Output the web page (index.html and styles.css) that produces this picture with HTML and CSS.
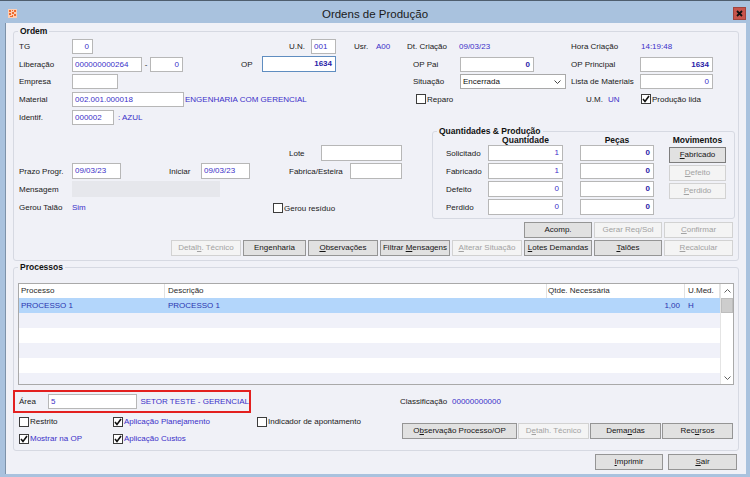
FILE: index.html
```html
<!DOCTYPE html>
<html lang="pt">
<head>
<meta charset="utf-8">
<title>Ordens de Produção</title>
<link rel="stylesheet" href="styles.css">
</head>
<body>
<div class="window">
  <div class="titlebar">
    <svg class="appicon" width="9" height="9" viewBox="0 0 9 9"><rect width="9" height="9" fill="#fbcfb6"/><path d="M1 1h2v2H1zM4 1h1v1H4zM4 3h2v2H4zM6 1h2v2H6zM1 4h2v2H1zM6 5h2v2H6zM2 7h2v1H2zM4 6h1v2H4z" fill="#ef6b2e"/></svg>
    <div class="title">Ordens de Produção</div>
    <div class="close"><svg width="7" height="7" viewBox="0 0 7 7"><path d="M1 1L6 6M6 1L1 6" stroke="#111" stroke-width="1.8"/></svg></div>
  </div>
  <div class="client">
    <section class="group ordem">
      <span class="legend">Ordem</span>
      <div class="row h18">
        <span class="lbl w53">TG</span>
        <span class="tb w21 r">0</span>
        <span class="lbl w218 ar">U.N.</span>
        <span class="tb w25">001</span>
        <span class="lbl w40 pl18">Usr.</span>
        <span class="val w31">A00</span>
        <span class="lbl w52">Dt. Criação</span>
        <span class="val w112">09/03/23</span>
        <span class="lbl w70">Hora Criação</span>
        <span class="val">14:19:48</span>
      </div>
      <div class="row h18">
        <span class="lbl w53">Liberação</span>
        <span class="tb w70">000000000264</span>
        <span class="lbl w8 ac">-</span>
        <span class="tb w33 r">0</span>
        <span class="lbl w79 pl58">OP</span>
        <span class="tb w74 r b focus">1634</span>
        <span class="sp w77"></span>
        <span class="lbl w47">OP Pai</span>
        <span class="tb w74 r b">0</span>
        <span class="sp w37"></span>
        <span class="lbl w69">OP Principal</span>
        <span class="tb w73 r b">1634</span>
      </div>
      <div class="row h17">
        <span class="lbl w53">Empresa</span>
        <span class="tb w46"></span>
        <span class="sp w295"></span>
        <span class="lbl w47">Situação</span>
        <span class="select w106"><span>Encerrada</span><svg width="7" height="4" viewBox="0 0 7 4"><path d="M0.5 0.5L3.5 3.5L6.5 0.5" stroke="#444" fill="none"/></svg></span>
        <span class="sp w5"></span>
        <span class="lbl w69">Lista de Materiais</span>
        <span class="tb w73 r">0</span>
      </div>
      <div class="row h18">
        <span class="lbl w53">Material</span>
        <span class="tb w112">002.001.000018</span>
        <span class="val w232 pl1">ENGENHARIA COM GERENCIAL</span>
        <span class="cb w170"><span class="box"></span>Reparo</span>
        <span class="lbl w22">U.M.</span>
        <span class="val w33">UN</span>
        <span class="cb"><span class="box"><svg width="8" height="8" viewBox="0 0 8 8"><path d="M1 4L3 6.5L7 1" stroke="#111" stroke-width="1.6" fill="none"/></svg></span>Produção lida</span>
      </div>
      <div class="row h18">
        <span class="lbl w53">Identif.</span>
        <span class="tb w42">000002</span>
        <span class="val pl4">: AZUL</span>
      </div>

      <div class="lower">
        <div class="lcol">
          <div class="row h18">
            <span class="sp w270"></span>
            <span class="lbl w32">Lote</span>
            <span class="tb h16 w81"></span>
          </div>
          <div class="row h18">
            <span class="lbl w53">Prazo Progr.</span>
            <span class="tb h16 w49">09/03/23</span>
            <span class="sp w48"></span>
            <span class="lbl w32">Iniciar</span>
            <span class="tb h16 w49">09/03/23</span>
            <span class="sp w39"></span>
            <span class="lbl w61">Fabrica/Esteira</span>
            <span class="tb h16 w52"></span>
          </div>
          <div class="row h18">
            <span class="lbl w53">Mensagem</span>
            <span class="msg w148"></span>
          </div>
          <div class="row h18">
            <span class="lbl w53">Gerou Talão</span>
            <span class="val w201">Sim</span>
            <span class="cb down1"><span class="box"></span>Gerou resíduo</span>
          </div>
        </div>
        <section class="group qtd">
          <span class="legend">Quantidades &amp; Produção</span>
          <div class="qhead">
            <span class="w42"></span>
            <span class="w75 ac">Quantidade</span>
            <span class="w17"></span>
            <span class="w74 ac">Peças</span>
            <span class="w15"></span>
            <span class="w57 ac">Movimentos</span>
          </div>
          <div class="qrow">
            <span class="lbl w42">Solicitado</span>
            <span class="tb h16 w75 r">1</span>
            <span class="sp w17"></span>
            <span class="tb h16 w74 r b">0</span>
            <span class="sp w15"></span>
            <span class="btn qb w57"><u>F</u>abricado</span>
          </div>
          <div class="qrow">
            <span class="lbl w42">Fabricado</span>
            <span class="tb h16 w75 r">1</span>
            <span class="sp w17"></span>
            <span class="tb h16 w74 r b">0</span>
            <span class="sp w15"></span>
            <span class="btn qb dis w57"><u>D</u>efeito</span>
          </div>
          <div class="qrow">
            <span class="lbl w42">Defeito</span>
            <span class="tb h16 w75 r">0</span>
            <span class="sp w17"></span>
            <span class="tb h16 w74 r b">0</span>
            <span class="sp w15"></span>
            <span class="btn qb dis w57"><u>P</u>erdido</span>
          </div>
          <div class="qrow">
            <span class="lbl w42">Perdido</span>
            <span class="tb h16 w75 r">0</span>
            <span class="sp w17"></span>
            <span class="tb h16 w74 r b">0</span>
          </div>
        </section>
      </div>

      <div class="btnrow first">
        <span class="btn w68">Acomp.</span>
        <span class="btn dis w68">Gerar Req/Sol</span>
        <span class="btn dis w69"><u>C</u>onfirmar</span>
      </div>
      <div class="btnrow">
        <span class="btn dis w70">Detal<u>h</u>. Técnico</span>
        <span class="btn w63">Engenharia</span>
        <span class="btn w70"><u>O</u>bservações</span>
        <span class="btn w70">Filtrar <u>M</u>ensagens</span>
        <span class="btn dis w70"><u>A</u>lterar Situação</span>
        <span class="btn w68"><u>L</u>otes Demandas</span>
        <span class="btn w68"><u>T</u>alões</span>
        <span class="btn dis w69"><u>R</u>ecalcular</span>
      </div>
    </section>

    <section class="group proc">
      <span class="legend">Processos</span>
      <div class="grid">
        <div class="gmain">
          <div class="ghead">
            <span class="c1">Processo</span><span class="c2">Descrição</span><span class="c3">Qtde. Necessária</span><span class="c4">U.Med.</span>
          </div>
          <div class="grow sel">
            <span class="c1">PROCESSO 1</span><span class="c2">PROCESSO 1</span><span class="c3 r">1,00</span><span class="c4">H</span>
          </div>
          <div class="grow alt"></div>
          <div class="grow"></div>
          <div class="grow alt"></div>
          <div class="grow"></div>
          <div class="grow alt"></div>
        </div>
        <div class="vscroll">
          <div class="sbtn"><svg width="7" height="4" viewBox="0 0 7 4"><path d="M0.5 3.5L3.5 0.5L6.5 3.5" stroke="#606060" fill="none"/></svg></div>
          <div class="thumb"></div>
          <div class="track"></div>
          <div class="sbtn dn"><svg width="7" height="4" viewBox="0 0 7 4"><path d="M0.5 0.5L3.5 3.5L6.5 0.5" stroke="#606060" fill="none"/></svg></div>
        </div>
      </div>

      <div class="arearow">
        <div class="area">
          <span class="lbl w30">Área</span>
          <span class="tb w92">5</span>
          <span class="val pl3">SETOR TESTE - GERENCIAL</span>
        </div>
        <span class="lbl w52 classif">Classificação</span>
        <span class="val">00000000000</span>
      </div>

      <div class="procbottom">
        <div class="checks">
          <div class="row h17">
            <span class="cb w94"><span class="box"></span>Restrito</span>
            <span class="cb w144 blue"><span class="box"><svg width="8" height="8" viewBox="0 0 8 8"><path d="M1 4L3 6.5L7 1" stroke="#111" stroke-width="1.6" fill="none"/></svg></span>Aplicação Planejamento</span>
            <span class="cb"><span class="box"></span>Indicador de apontamento</span>
          </div>
          <div class="row h17">
            <span class="cb w94 blue"><span class="box"><svg width="8" height="8" viewBox="0 0 8 8"><path d="M1 4L3 6.5L7 1" stroke="#111" stroke-width="1.6" fill="none"/></svg></span>Mostrar na OP</span>
            <span class="cb w144 blue"><span class="box"><svg width="8" height="8" viewBox="0 0 8 8"><path d="M1 4L3 6.5L7 1" stroke="#111" stroke-width="1.6" fill="none"/></svg></span>Aplicação Custos</span>
          </div>
        </div>
        <div class="pbtns">
          <span class="btn w115">O<u>b</u>servação Processo/OP</span>
          <span class="btn dis w71">D<u>e</u>talh. Técnico</span>
          <span class="btn w71">Dema<u>n</u>das</span>
          <span class="btn w71">Rec<u>u</u>rsos</span>
        </div>
      </div>
    </section>

    <div class="footer">
      <span class="btn w68"><u>I</u>mprimir</span>
      <span class="btn w69"><u>S</u>air</span>
    </div>
  </div>
</div>
</body>
</html>
```

FILE: styles.css
```css
* { box-sizing: border-box; }
html, body { margin: 0; padding: 0; }
body {
  width: 750px; height: 477px; overflow: hidden;
  background: #a9c2de;
  font-family: "Liberation Sans", Arial, sans-serif;
  font-size: 8px;
  color: #202020;
}
u { text-decoration: underline; text-underline-offset: 1px; }

.window { width: 750px; height: 477px; border-top: 1px solid #4f5e6e; background: #a9c2de; }
.titlebar { display: flex; align-items: flex-start; height: 22px; }
.appicon { flex: none; margin: 8px 0 0 8px; }
.title { flex: 1; text-align: center; font-size: 11.5px; line-height: 14px; padding-top: 6px; color: #1a1a1a; }
.close {
  flex: none; width: 13px; height: 13px; margin: 6px 4px 0 0;
  background: #c8554c; border: 1px solid #a1443d;
  display: flex; align-items: center; justify-content: center;
}
.client {
  margin-left: 6px; width: 740px; height: 451px;
  background: #f0f1f7; box-shadow: -1px 0 0 #7d92a9;
  display: flow-root;
}

.group { position: relative; border: 1px solid #d6d9e2; border-radius: 3px; }
.legend {
  position: absolute; top: -6px; left: 4px; padding: 0 2px;
  background: #f0f1f7; font-weight: bold; font-size: 8.5px; line-height: 10px;
  color: #111; white-space: nowrap;
}
.ordem { margin: 8px 0 0 7px; width: 726px; height: 230px; padding: 5px 0 0 5px; }

.row { display: flex; align-items: center; }
.row > *, .qrow > *, .qhead > * { flex: none; }
.h18 { height: 18px; }
.h17 { height: 17px; }

.lbl { white-space: nowrap; color: #202020; }
.val { white-space: nowrap; color: #3b30c9; }
.ar { text-align: right; padding-right: 6px; }
.ac { text-align: center; }
.pl1 { padding-left: 1px; }
.pl3 { padding-left: 3px; }
.pl4 { padding-left: 4px; }
.pl18 { padding-left: 18px; }
.pl58 { padding-left: 58px; }

.tb {
  height: 15px; border: 1px solid #b7b7b7; background: #fff; color: #3b30c9;
  line-height: 13px; padding: 0 2px; white-space: nowrap; overflow: hidden;
}
.tb.h16 { height: 16px; line-height: 14px; }
.tb.r { text-align: right; padding-right: 3px; }
.tb.b { font-weight: bold; color: #2a22a8; }
.tb.focus { height: 16px; line-height: 14px; border-color: #5f8dc0; }

.select {
  height: 15px; border: 1px solid #a9a9a9; background: #fff; color: #111;
  display: flex; align-items: center; justify-content: space-between; padding: 0 4px 0 2px;
}
.msg { height: 16px; background: #e6e7ec; }

.cb { display: flex; align-items: center; white-space: nowrap; color: #202020; }
.cb.blue { color: #3b30c9; }
.cb.down1 { margin-top: 2px; }
.box {
  width: 10px; height: 10px; border: 1px solid #3c3c3c; background: #fff;
  margin-right: 1px; display: flex; align-items: center; justify-content: center; flex: none;
}

.w5 { width: 5px; } .w8 { width: 8px; } .w15 { width: 15px; } .w17 { width: 17px; }
.w21 { width: 21px; } .w22 { width: 22px; } .w25 { width: 25px; } .w30 { width: 30px; }
.w31 { width: 31px; } .w32 { width: 32px; } .w33 { width: 33px; } .w37 { width: 37px; }
.w39 { width: 39px; } .w40 { width: 40px; } .w42 { width: 42px; } .w46 { width: 46px; }
.w47 { width: 47px; } .w48 { width: 48px; } .w49 { width: 49px; } .w52 { width: 52px; }
.w53 { width: 53px; } .w57 { width: 57px; } .w61 { width: 61px; } .w63 { width: 63px; }
.w68 { width: 68px; } .w69 { width: 69px; } .w70 { width: 70px; } .w71 { width: 71px; }
.w73 { width: 73px; } .w74 { width: 74px; } .w75 { width: 75px; } .w77 { width: 77px; }
.w79 { width: 79px; } .w81 { width: 81px; } .w92 { width: 92px; } .w94 { width: 94px; }
.w106 { width: 106px; } .w112 { width: 112px; } .w115 { width: 115px; } .w144 { width: 144px; }
.w148 { width: 148px; } .w170 { width: 170px; } .w201 { width: 201px; } .w218 { width: 218px; }
.w232 { width: 232px; } .w270 { width: 270px; } .w295 { width: 295px; }

.lower { display: flex; align-items: flex-start; }
.lcol { width: 413px; padding-top: 18px; }
.qtd { width: 303px; height: 88px; margin-top: 5px; padding: 1px 0 0 13px; }
.qtd .legend { line-height: 9px; top: -5px; }
.qhead { display: flex; height: 11px; padding-top: 3px; line-height: 8px; font-weight: bold; font-size: 8.5px; color: #111; }
.qrow { display: flex; align-items: flex-start; height: 18px; }
.qrow .lbl { align-self: center; }
.qrow .tb { margin-top: 1px; }
.qrow .qb { margin-top: 3px; }

.btn {
  display: block; height: 16px; border: 1px solid #959595; background: #e1e1e1;
  line-height: 14px; text-align: center; color: #151515; white-space: nowrap; overflow: hidden;
}
.btn.qb { border-color: #7d7d7d; }
.btn.dis { border-color: #d2d2d2; background: #f4f4f4; color: #a2a2a2; }

.btnrow { display: flex; justify-content: flex-end; gap: 2px; padding-right: 5px; margin-top: 2px; }
.btnrow.first { margin-top: 3px; }

.proc { margin: 6px 0 0 7px; width: 726px; height: 184px; padding-top: 15px; }
.grid {
  margin-left: 4px; width: 716px; height: 102px; border: 1px solid #a9a9a9;
  background: #fff; display: flex; overflow: hidden;
}
.gmain { width: 701px; }
.ghead, .grow { display: flex; }
.ghead { height: 14px; line-height: 14px; color: #2a2a2a; }
.ghead span { border-right: 1px solid #e2e2e2; }
.grow { height: 15px; line-height: 15px; color: #2a35b0; }
.grow.sel { background: #b3d6fb; }
.grow.alt { background: #f0f1f9; }
.c1, .c2, .c3, .c4 { flex: none; padding-left: 2px; white-space: nowrap; }
.c1 { width: 146px; }
.c2 { width: 382px; padding-left: 3px; }
.c3 { width: 138px; padding-left: 1px; }
.c3.r { text-align: right; padding-right: 5px; }
.c4 { width: 35px; padding-left: 3px; }
.vscroll { width: 13px; display: flex; flex-direction: column; border-left: 1px solid #e4e4e4; background: #fff; }
.sbtn { height: 14px; display: flex; align-items: center; justify-content: center; flex: none; }
.sbtn.dn { height: 13px; }
.thumb { height: 15px; background: #cdcdcd; border: 1px solid #bdbdbd; flex: none; }
.track { flex: 1; }

.arearow { display: flex; align-items: center; margin-top: 5px; }
.area {
  margin-left: -1px; width: 238px; height: 23px; border: 2px solid #e3201f;
  display: flex; align-items: center; padding-left: 4px;
}
.classif { margin-left: 149px; }

.procbottom { display: flex; align-items: flex-start; }
.checks { padding-left: 5px; }
.pbtns { display: flex; gap: 1px; margin: 10px 5px 0 auto; }

.footer { display: flex; justify-content: flex-end; gap: 5px; padding-right: 9px; margin-top: 3px; }
```
